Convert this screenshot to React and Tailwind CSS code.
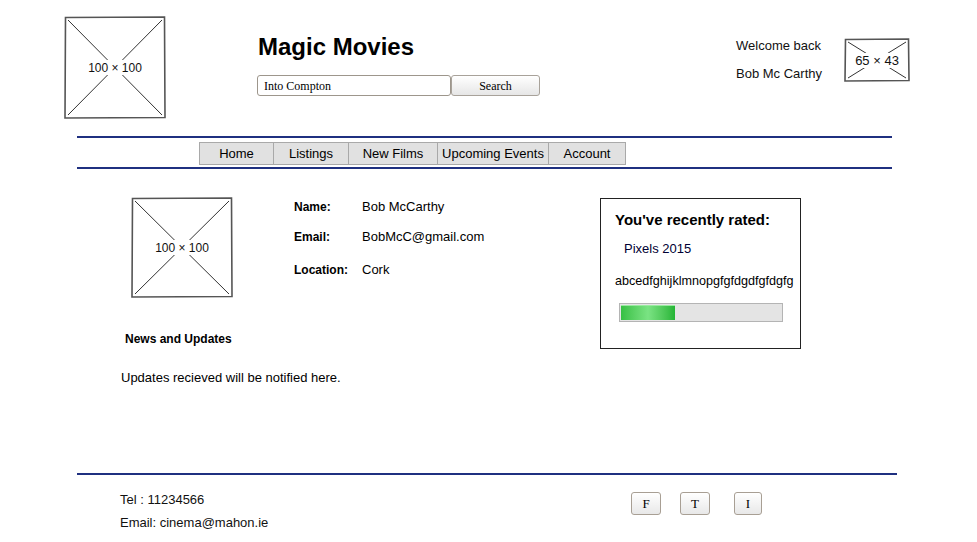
import React from 'react'

function Placeholder({ w, h, label, textSize = 'text-[12px]' }) {
  return (
    <div className="relative shrink-0" style={{ width: w, height: h }}>
      <svg className="absolute inset-0" width={w} height={h} viewBox={`0 0 ${w} ${h}`}>
        <path d={`M1.5 1.5 L${w - 1.5} 1 L${w - 1} ${h - 1.5} L1 ${h - 1} Z`} fill="none" stroke="#555" strokeWidth="1.6" />
        <path d={`M4 4 L${w - 4} ${h - 4} M${w - 4} 4 L4 ${h - 4}`} stroke="#333" strokeWidth="1" />
      </svg>
      <div className="absolute inset-0 flex items-center justify-center">
        <span className={`bg-white px-[1px] pt-[1px] leading-[14px] text-[#111] ${textSize}`}>{label}</span>
      </div>
    </div>
  )
}

const nav = [
  { label: 'Home', w: 'w-[75px]' },
  { label: 'Listings', w: 'w-[76px]' },
  { label: 'New Films', w: 'w-[90px]' },
  { label: 'Upcoming Events', w: 'w-[112px]' },
  { label: 'Account', w: 'w-[78px]' },
]

export default function App() {
  return (
    <div className="w-[977px] h-[542px] bg-white overflow-hidden text-black font-['Liberation_Sans',Arial,sans-serif]">
      {/* header */}
      <div className="flex h-[136px] pt-[15px]">
        <div className="ml-[64px] mt-[1px]">
          <Placeholder w={102} h={103} label="100 × 100" />
        </div>
        <div className="ml-[91px] w-[283px]">
          <h1 className="mt-[18px] text-[24px] leading-[28px] font-bold pl-[1px]">Magic Movies</h1>
          <div className="mt-[14px] flex font-['Liberation_Serif','Times_New_Roman',serif] text-[12px]">
            <div className="w-[194px] h-[21px] border border-[#9d968c] rounded-[3px] flex items-center pl-[6px]">Into Compton</div>
            <button className="w-[89px] h-[21px] border border-[#a8a29a] rounded-[3px] bg-linear-to-b from-white to-[#e6e6e6] text-center leading-[21px]">Search</button>
          </div>
        </div>
        <div className="ml-[196px] w-[108px] mt-[17px] text-[13px] leading-[28px] text-[#111]">
          <p>Welcome back</p>
          <p>Bob Mc Carthy</p>
        </div>
        <div className="mt-[23px]">
          <Placeholder w={66} h={44} label="65 × 43" textSize="text-[13px]" />
        </div>
      </div>

      {/* nav */}
      <div className="ml-[77px] w-[815px] h-[2px] bg-[#1f3080]" />
      <div className="ml-[199px] mt-[4px] flex h-[23px]">
        {nav.map((n, i) => (
          <div key={n.label} className={`${n.w} ${i > 0 ? '-ml-px' : ''} h-[23px] border border-[#a9a9a9] bg-[#e1e1e1] text-[13px] pt-[1px] leading-[20px] text-center`}>{n.label}</div>
        ))}
      </div>
      <div className="ml-[77px] mt-[2px] w-[815px] h-[2px] bg-[#1f3080]" />

      {/* content */}
      <div className="h-[304px] flex pt-[28px]">
        <div className="ml-[121px] w-[173px]">
          <div className="ml-[10px]">
            <Placeholder w={102} h={101} label="100 × 100" />
          </div>
          <p className="ml-[4px] mt-[34px] text-[12px] leading-[14px] font-bold">News and Updates</p>
          <p className="mt-[24px] text-[13px] leading-[15px] whitespace-nowrap">Updates recieved will be notified here.</p>
        </div>
        <div className="w-[306px] pt-[2px] text-[13px] leading-[15px]">
          <div className="flex items-baseline">
            <span className="w-[68px] text-[12px] font-bold">Name:</span>
            <span>Bob McCarthy</span>
          </div>
          <div className="flex items-baseline mt-[14px]">
            <span className="w-[68px] text-[12px] font-bold">Email:</span>
            <span>BobMcC@gmail.com</span>
          </div>
          <div className="flex items-baseline mt-[17px]">
            <span className="w-[68px] text-[12px] font-bold">Location:</span>
            <span>Cork</span>
          </div>
        </div>
        <div className="mt-[1px] w-[201px] h-[151px] border border-[#222] pl-[14px] pt-[12px]">
          <p className="text-[15px] leading-[17px] font-bold">You've recently rated:</p>
          <p className="ml-[9px] mt-[13px] text-[13px] leading-[15px] text-[#000033]">Pixels 2015</p>
          <p className="mt-[18px] text-[12.6px] leading-[14px] whitespace-nowrap">abcedfghijklmnopgfgfdgdfgfdgfg</p>
          <div className="ml-[4px] mt-[15px] w-[164px] h-[19px] border border-[#b4b4b4] bg-[#e4e4e4] p-[1px]">
            <div className="w-[54px] h-full bg-linear-to-r from-[#35c043] via-[#7ae383] to-[#22b535] border-t border-[#9aeba0]" />
          </div>
        </div>
      </div>

      {/* footer */}
      <div className="ml-[77px] w-[820px] h-[2px] bg-[#1f3080]" />
      <div className="flex">
        <div className="ml-[120px] w-[511px] pt-[13px] text-[13px] leading-[23px] text-[#111]">
          <p>Tel : 11234566</p>
          <p>Email: cinema@mahon.ie</p>
        </div>
        <div className="flex mt-[17px] font-['Liberation_Serif','Times_New_Roman',serif] text-[13px]">
          <button className="w-[30px] h-[23px] border border-[#a89f94] rounded-[3px] bg-linear-to-b from-white to-[#e8e8e8]">F</button>
          <button className="ml-[19px] w-[30px] h-[23px] border border-[#a89f94] rounded-[3px] bg-linear-to-b from-white to-[#e8e8e8]">T</button>
          <button className="ml-[24px] w-[28px] h-[23px] border border-[#a89f94] rounded-[3px] bg-linear-to-b from-white to-[#e8e8e8]">I</button>
        </div>
      </div>
    </div>
  )
}
